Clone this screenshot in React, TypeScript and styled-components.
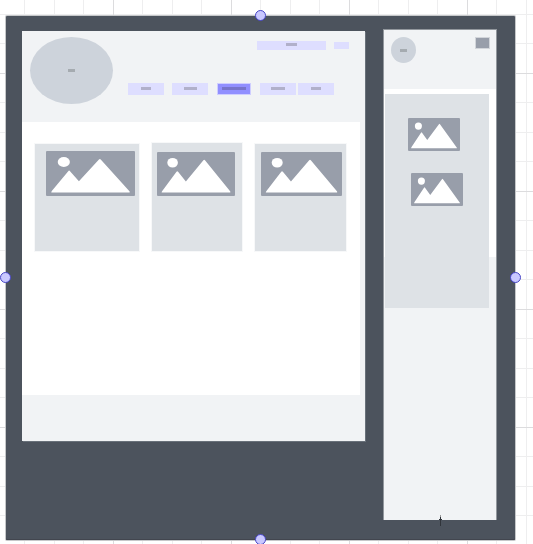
import React from "react";
import styled, { createGlobalStyle } from "styled-components";

const GlobalStyle = createGlobalStyle`
  *, *::before, *::after { box-sizing: border-box; }
  body { margin: 0; background: #fff; font-family: "Liberation Sans", Arial, sans-serif; }
`;

/* Canvas paper: faint lines, with every fourth one stronger */
const Canvas = styled.main`
  min-height: 100vh;
  padding: 16px 18px 4px 6px;
  overflow: hidden;
  background-image:
    linear-gradient(90deg, #dcdcde 1px, transparent 1px),
    linear-gradient(#dcdcde 1px, transparent 1px),
    linear-gradient(90deg, transparent 29px, #eeeeef 29px 30px, transparent 30px 59px, #eeeeef 59px 60px, transparent 60px 88px, #eeeeef 88px 89px, transparent 89px),
    linear-gradient(transparent 29px, #eeeeef 29px 30px, transparent 30px 59px, #eeeeef 59px 60px, transparent 60px 88px, #eeeeef 88px 89px, transparent 89px);
  background-size: 118px 118px;
  background-position: -5px -45px;
`;

const Board = styled.section`
  position: relative;
  display: grid;
  grid-template-columns: minmax(0, 343fr) minmax(0, 114fr);
  align-items: start;
  gap: 18px;
  padding: 13px 18px 20px 16px;
  background: #4c535d;
  border-radius: 1px;
  box-shadow: 0 0 0 1px #c6c8ca, inset 0 -1px #42464f;
`;

const handleSpots = {
  top: "left: 50%; top: 0;",
  right: "left: 100%; top: 50%;",
  bottom: "left: 50%; top: 100%;",
  left: "left: 0; top: 50%;",
};

const Handle = styled.button<{ $side: keyof typeof handleSpots }>`
  position: absolute;
  ${(p) => handleSpots[p.$side]}
  width: 11px;
  height: 11px;
  margin: -6px 0 0 ${(p) => (p.$side === "right" ? -5 : -6)}px;
  padding: 0;
  border: 1px solid #4745c6;
  border-radius: 50%;
  background: #c9c8ff;
`;

const Desktop = styled.article`
  margin-top: 2px;
  background: #f1f3f5;
  box-shadow: 1px 1px #69717a;
`;

const DesktopHeader = styled.header`
  display: flex;
  align-items: flex-start;
  gap: 15px;
  padding: 6px 0 18px 8px;
`;

const Logo = styled.a<{ $w: number; $h: number }>`
  display: flex;
  flex: none;
  align-items: center;
  justify-content: center;
  width: ${(p) => p.$w}px;
  height: ${(p) => p.$h}px;
  border-radius: 50%;
  background: #cdd3db;
`;

const Bar = styled.span<{ $w: number; $color?: string }>`
  display: block;
  width: ${(p) => p.$w}px;
  height: 3px;
  background: ${(p) => p.$color ?? "#b1b0ca"};
`;

const HeaderTools = styled.div`
  flex: 1;
  min-width: 0;
  padding-top: 4px;
`;

const Actions = styled.div`
  display: flex;
  align-items: center;
  justify-content: flex-end;
  gap: 8px;
  padding-right: 16px;
`;

const Action = styled.button<{ $w: number; $h: number }>`
  display: flex;
  justify-content: center;
  width: ${(p) => p.$w}px;
  height: ${(p) => p.$h}px;
  padding: 2px 0 0;
  border: 0;
  background: #dedeff;
`;

const Nav = styled.nav`
  display: flex;
  justify-content: space-between;
  padding: 33px 31px 0 0;
`;

const NavGroup = styled.div<{ $gap: number }>`
  display: flex;
  gap: ${(p) => p.$gap}px;
`;

const NavLink = styled.a<{ $active?: boolean }>`
  display: flex;
  justify-content: center;
  width: ${(p) => (p.$active ? 34 : 36)}px;
  height: 12px;
  padding-top: ${(p) => (p.$active ? 3 : 4)}px;
  border: ${(p) => (p.$active ? "1px solid #cfceff" : "0")};
  background: ${(p) => (p.$active ? "#918fff" : "#dedeff")};
`;

const Content = styled.section`
  display: grid;
  grid-template-columns: 104fr 90fr 91fr;
  align-items: end;
  gap: 13px;
  margin-right: 5px;
  padding: 21px 14px 144px 13px;
  background: #fff;
`;

const Card = styled.article<{ $pad: string }>`
  padding: ${(p) => p.$pad};
  background: #dee2e6;
  box-shadow: 0 0 0 1px #f7f8f9;
`;

const DesktopFooter = styled.footer`
  height: 46px;
`;

const Mobile = styled.article`
  min-height: 491px;
  background: #f1f3f5;
  border: 1px solid #92979d;
  border-bottom: 0;
`;

const MobileHeader = styled.header`
  display: flex;
  align-items: flex-start;
  justify-content: space-between;
  height: 59px;
  padding: 7px 7px 0;
`;

const MenuButton = styled.button`
  width: 13px;
  height: 10px;
  margin-top: 1px;
  padding: 0;
  border: 0;
  background: #989eaa;
  box-shadow: 0 0 0 1px #d2d5da;
`;

const MobileContent = styled.section`
  height: 168px;
  padding: 5px 7px 0 1px;
  background: #fff;
`;

/* Taller than the white section, so it runs on over the page below */
const Feed = styled.div`
  display: flex;
  flex-direction: column;
  gap: 22px;
  height: 214px;
  padding: 24px 26px 0 23px;
  background: #dee2e6;
`;

const FeedItem = styled.div<{ $indent: number }>`
  width: 52px;
  margin-left: ${(p) => p.$indent}px;
`;

const Drawing = styled.svg<{ $h: number }>`
  display: block;
  width: 100%;
  height: ${(p) => p.$h}px;
  background: #989eaa;
  border-radius: 1px;
`;

const Pointer = styled.svg`
  position: absolute;
  right: 72px;
  bottom: 13px;
  width: 5px;
  height: 12px;
`;

function Picture({ height }: { height: number }) {
  return (
    <Drawing $h={height} viewBox="0 0 100 100" preserveAspectRatio="none" aria-hidden="true">
      <ellipse cx="20" cy="24.5" rx="6.8" ry="11" fill="#fff" />
      <path d="M6 91 L6.5 89 L25 45 Q26 42 27 45 L37 67 L59.5 19 Q60.5 16 61.5 19 L94 90 V92 H6Z" fill="#fff" />
    </Drawing>
  );
}

export default function App() {
  return (
    <>
      <GlobalStyle />
      <Canvas>
        <Board>
          <Desktop>
            <DesktopHeader>
              <Logo href="#" aria-label="Home" $w={83} $h={67}>
                <Bar $w={7} $color="#a5abb0" />
              </Logo>
              <HeaderTools>
                <Actions>
                  <Action aria-label="Search" $w={69} $h={9}>
                    <Bar $w={11} />
                  </Action>
                  <Action aria-label="Account" $w={15} $h={7} />
                </Actions>
                <Nav>
                  <NavGroup $gap={8}>
                    <NavLink href="#" aria-label="Page 1"><Bar $w={10} /></NavLink>
                    <NavLink href="#" aria-label="Page 2"><Bar $w={13} /></NavLink>
                  </NavGroup>
                  <NavLink href="#" aria-label="Page 3" aria-current="page" $active>
                    <Bar $w={24} $color="#7774cb" />
                  </NavLink>
                  <NavGroup $gap={2}>
                    <NavLink href="#" aria-label="Page 4"><Bar $w={14} /></NavLink>
                    <NavLink href="#" aria-label="Page 5"><Bar $w={10} /></NavLink>
                  </NavGroup>
                </Nav>
              </HeaderTools>
            </DesktopHeader>
            <Content>
              <Card $pad="7px 4px 55px 11px"><Picture height={45} /></Card>
              <Card $pad="9px 7px 55px 5px"><Picture height={44} /></Card>
              <Card $pad="8px 4px 55px 6px"><Picture height={44} /></Card>
            </Content>
            <DesktopFooter />
          </Desktop>
          <Mobile>
            <MobileHeader>
              <Logo href="#" aria-label="Home" $w={25} $h={26}>
                <Bar $w={7} $color="#a5abb0" />
              </Logo>
              <MenuButton aria-label="Menu" />
            </MobileHeader>
            <MobileContent>
              <Feed>
                <FeedItem $indent={0}><Picture height={33} /></FeedItem>
                <FeedItem $indent={3}><Picture height={33} /></FeedItem>
              </Feed>
            </MobileContent>
          </Mobile>
          <Pointer viewBox="0 0 5 12" aria-hidden="true">
            <path d="M2 0h1v2h-1z" fill="#999" />
            <path d="M2 2h1v2h1v1h-1v6h-1V5h-1V4h1z" fill="#30343a" />
          </Pointer>
          <Handle $side="top" aria-label="Resize top" />
          <Handle $side="right" aria-label="Resize right" />
          <Handle $side="bottom" aria-label="Resize bottom" />
          <Handle $side="left" aria-label="Resize left" />
        </Board>
      </Canvas>
    </>
  );
}
